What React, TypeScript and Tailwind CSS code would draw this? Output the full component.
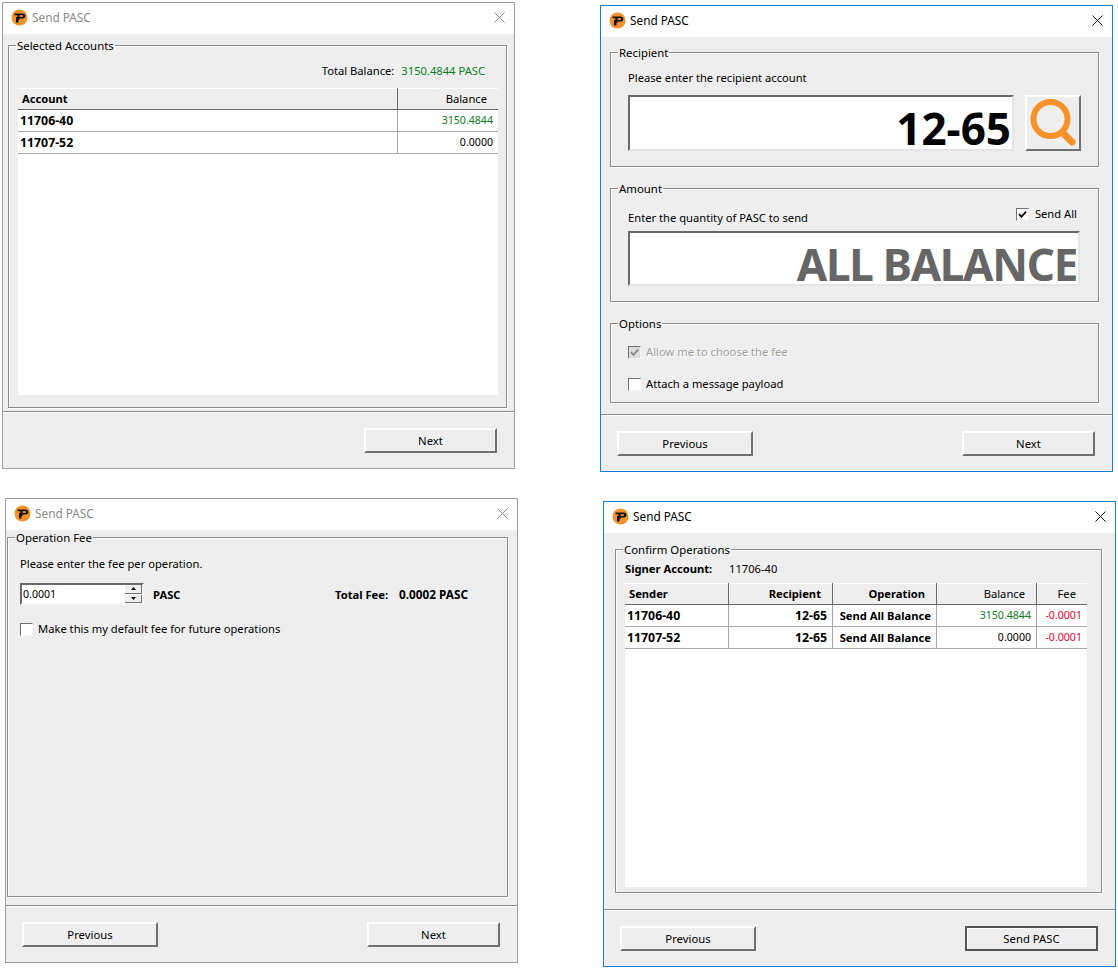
import type { ReactNode } from 'react';

const GREEN = 'text-[#0a7d1e]';
const RED = 'text-[#f5002f]';

function Logo() {
  return (
    <svg width="17" height="17" viewBox="0 0 17 17" className="shrink-0">
      <circle cx="8.5" cy="8.5" r="8" fill="#f7922a" />
      <path d="M3.5 4.5h8.5a2.5 2.5 0 0 1 0 5H8.5v1.5H7.5v2.5H5V8H6.3V6.3H3.5z" fill="#111" />
      <rect x="8.5" y="6.2" width="3.5" height="1.7" fill="#f7922a" />
    </svg>
  );
}

function Window({
  className,
  active,
  children
}: {
  className: string;
  active?: boolean;
  children: ReactNode;
}) {
  return (
    <div className={`absolute flex flex-col border bg-[#eeeeee] ${active ? 'border-[#1a7fd0]' : 'border-[#a0a0a0]'} ${className}`}>
      <div className="flex h-[31px] shrink-0 items-center bg-white pb-[2px] pl-2 pr-[9px]">
        <Logo />
        <span className={`ml-1 text-[11.8px] ${active ? 'text-black' : 'text-[#8a8a8a]'}`}>Send PASC</span>
        <svg width="11" height="11" viewBox="0 0 11 11" className="ml-auto" stroke={active ? '#111' : '#8a8a8a'}>
          <path d="M.5.5l10 10M10.5.5l-10 10" fill="none" />
        </svg>
      </div>
      {children}
    </div>
  );
}

function Group({ title, className, children }: { title: string; className: string; children: ReactNode }) {
  return (
    <div className={`relative flex flex-col border border-[#8c8c8c] shadow-[1px_1px_0_#fff,inset_1px_1px_0_#fff] ${className}`}>
      <span className="absolute -top-[8px] left-[7px] bg-[#eeeeee] px-[1px] text-[11.4px] leading-4 text-black">{title}</span>
      {children}
    </div>
  );
}

function Button({ label, className, primary }: { label: string; className: string; primary?: boolean }) {
  return (
    <button
      type="button"
      className={`h-[25px] bg-[#eeeeee] pt-[1px] text-[11.3px] text-black ${
        primary
          ? 'border-2 border-t-[#555] border-r-[#555] border-b-[#555] border-l-[#555] shadow-[inset_1px_1px_0_#fff]'
          : 'border-2 border-t-white border-l-white border-r-[#707070] border-b-[#707070]'
      } ${className}`}
    >
      {label}
    </button>
  );
}

function Footer({ previous, next = 'Next', primary }: { previous?: boolean; next?: string; primary?: boolean }) {
  return (
    <div className="flex h-[57px] shrink-0 items-start justify-between border-t border-[#8c8c8c] pl-4 pr-[17px] pt-4 shadow-[inset_0_1px_0_#fff]">
      {previous ? <Button label="Previous" className="w-[136px]" /> : <span />}
      <Button label={next} className="w-[133px]" primary={primary} />
    </div>
  );
}

function Checkbox({ checked, disabled }: { checked?: boolean; disabled?: boolean }) {
  return (
    <span
      className={`flex h-[13px] w-[13px] shrink-0 items-center justify-center border border-t-[#707070] border-l-[#707070] border-r-[#f5f5f5] border-b-[#f5f5f5] ${
        disabled ? 'bg-[#dcdcdc]' : 'bg-white'
      }`}
    >
      {checked ? (
        <svg width="9" height="9" viewBox="0 0 9 9">
          <path d="M1 4.2l2.4 2.6L8 1.6" fill="none" stroke={disabled ? '#8a8a8a' : '#000'} strokeWidth="1.8" />
        </svg>
      ) : null}
    </span>
  );
}

type Cell = { text: string; align?: 'right'; bold?: boolean; num?: boolean; color?: string };

function cellFont(c: Cell) {
  if (c.num) return c.bold ? 'text-[12.3px] font-bold' : 'text-[10.6px]';
  return c.bold ? 'font-bold' : '';
}

function Table({
  columns,
  header,
  rows,
  className
}: {
  columns: string;
  header: Cell[];
  rows: Cell[][];
  className: string;
}) {
  return (
    <div className={`flex flex-col bg-white text-black ${className}`}>
      <div className={`grid h-[22px] shrink-0 border-b border-[#6a6a6a] bg-[#eeeeee] shadow-[inset_0_1px_0_#fff] ${columns}`}>
        {header.map((c, i) => (
          <div
            key={c.text}
            className={`flex items-center pt-[2px] ${i > 0 ? 'border-l border-[#6a6a6a]' : ''} ${
              c.align === 'right' ? 'justify-end pr-[11px]' : 'pl-1'
            } ${cellFont(c)}`}
          >
            {c.text}
          </div>
        ))}
      </div>
      {rows.map((row) => (
        <div key={row[0].text} className={`grid h-[22px] shrink-0 border-b border-[#a8a8a8] ${columns}`}>
          {row.map((c, i) => (
            <div
              key={i}
              className={`flex items-center pt-[1px] ${i > 0 ? 'border-l border-[#a8a8a8]' : ''} ${
                c.align === 'right' ? 'justify-end pr-[5px]' : 'pl-[2px]'
              } ${cellFont(c)} ${c.color ?? ''}`}
            >
              {c.text}
            </div>
          ))}
        </div>
      ))}
    </div>
  );
}

function BigField({ value, className, textClass }: { value: string; className: string; textClass: string }) {
  return (
    <div
      className={`flex items-center justify-end border-2 border-t-[#6a6a6a] border-l-[#6a6a6a] border-r-[#e4e4e4] border-b-[#e4e4e4] bg-white pr-[1px] ${className}`}
    >
      <span className={`font-bold ${textClass}`}>{value}</span>
    </div>
  );
}

function Spinner() {
  return (
    <div className="flex h-[22px] w-[124px] border-2 border-t-[#6a6a6a] border-l-[#6a6a6a] border-r-[#f5f5f5] border-b-[#f5f5f5] bg-white">
      <span className="flex-1 pl-[1px] text-[10.6px] leading-[18px] text-black">0.0001</span>
      <div className="flex w-[17px] flex-col">
        <span className="flex h-[9px] items-center justify-center border-b border-r border-[#707070] bg-[#eeeeee]">
          <svg width="5" height="3" viewBox="0 0 5 3"><path d="M2.5 0L5 3H0z" fill="#000" /></svg>
        </span>
        <span className="mt-[1px] flex h-[9px] items-center justify-center border-b border-r border-[#707070] bg-[#eeeeee]">
          <svg width="5" height="3" viewBox="0 0 5 3"><path d="M0 0h5L2.5 3z" fill="#000" /></svg>
        </span>
      </div>
    </div>
  );
}

export default function App() {
  return (
    <div className="relative h-[969px] w-[1118px] overflow-hidden bg-white font-['Noto_Sans',sans-serif] text-[11.2px]">
      {/* Selected accounts */}
      <Window className="left-[2px] top-[2px] h-[467px] w-[513px]">
        <div className="flex min-h-0 flex-1 flex-col pb-[3px] pl-[5px] pr-[7px] pt-[11px]">
          <Group title="Selected Accounts" className="flex-1 pb-3 pl-[9px] pr-2 pt-[17px]">
            <div className="mb-[9px] mr-[13px] flex h-4 items-center justify-end pt-[1px]">
              <span className="text-black">Total Balance:</span>
              <span className={`ml-[7px] ${GREEN}`}>3150.4844 PASC</span>
            </div>
            <Table
              className="flex-1"
              columns="grid-cols-[379px_101px]"
              header={[{ text: 'Account', bold: true }, { text: 'Balance', align: 'right' }]}
              rows={[
                [{ text: '11706-40', bold: true, num: true }, { text: '3150.4844', align: 'right', num: true, color: GREEN }],
                [{ text: '11707-52', bold: true, num: true }, { text: '0.0000', align: 'right', num: true }]
              ]}
            />
          </Group>
        </div>
        <Footer />
      </Window>

      {/* Recipient and amount */}
      <Window active className="left-[600px] top-[5px] h-[467px] w-[513px]">
        <div className="flex min-h-0 flex-1 flex-col pb-[11px] pl-[9px] pr-[13px] pt-[15px]">
          <Group title="Recipient" className="h-[116px] px-[17px] pt-[17px]">
            <div className="mb-[9px] flex h-4 items-center pt-[1px] text-black">Please enter the recipient account</div>
            <div className="flex items-start">
              <BigField value="12-65" className="h-[56px] w-[386px]" textClass="pt-[10px] text-[44px] leading-[40px] text-black" />
              <div className="ml-[11px] flex h-[56px] w-[56px] items-center justify-center border-2 border-t-white border-l-white border-r-[#707070] border-b-[#707070]">
                <svg width="46" height="48" viewBox="0 0 46 48" fill="none" stroke="#f7922a" strokeLinecap="round">
                  <circle cx="20.5" cy="20" r="17" strokeWidth="6" />
                  <path d="M33 34l9 9" strokeWidth="7" />
                </svg>
              </div>
            </div>
          </Group>
          <Group title="Amount" className="mt-[21px] h-[115px] px-[17px] pt-[20px]">
            <div className="flex h-4 items-center justify-between text-black">
              <span className="pt-[2px]">Enter the quantity of PASC to send</span>
              <span className="-mt-[5px] flex items-center pr-1">
                <Checkbox checked />
                <span className="ml-[6px]">Send All</span>
              </span>
            </div>
            <BigField value="ALL BALANCE" className="mt-[6px] h-[55px] w-[452px]" textClass="pt-[11px] text-[44px] leading-[40px] tracking-[-1.3px] text-[#666666]" />
          </Group>
          <Group title="Options" className="mt-[21px] h-[80px] px-[17px] pt-[20px]">
            <div className="flex h-4 items-center">
              <Checkbox checked disabled />
              <span className="ml-[5px] text-[#a0a0a0] [text-shadow:1px_1px_0_#fff]">Allow me to choose the fee</span>
            </div>
            <div className="mt-4 flex h-4 items-center text-black">
              <Checkbox />
              <span className="ml-[5px]">Attach a message payload</span>
            </div>
          </Group>
        </div>
        <Footer previous />
      </Window>

      {/* Operation fee */}
      <Window className="left-[5px] top-[498px] h-[465px] w-[513px]">
        <div className="flex min-h-0 flex-1 flex-col pb-2 pl-[1px] pr-[9px] pt-[7px]">
          <Group title="Operation Fee" className="flex-1 pl-3 pt-[18px] text-black">
            <div className="flex h-4 items-center">Please enter the fee per operation.</div>
            <div className="mt-[11px] flex items-center">
              <Spinner />
              <span className="ml-[9px] w-[182px] pt-[2px] font-bold">PASC</span>
              <span className="w-[64px] pt-[2px] font-bold">Total Fee:</span>
              <span className="pt-[2px] text-[11.8px] font-bold">0.0002 PASC</span>
            </div>
            <div className="mt-4 flex h-4 items-center">
              <Checkbox />
              <span className="ml-[5px]">Make this my default fee for future operations</span>
            </div>
          </Group>
        </div>
        <Footer previous />
      </Window>

      {/* Confirm */}
      <Window active className="left-[603px] top-[501px] h-[466px] w-[513px]">
        <div className="flex min-h-0 flex-1 flex-col pb-4 pl-[11px] pr-[13px] pt-4">
          <Group title="Confirm Operations" className="flex-1 pb-[5px] pl-[9px] pr-[14px] pt-[11px]">
            <div className="mb-[6px] flex h-4 items-center pt-[1px] text-black">
              <span className="w-[104px] font-bold">Signer Account:</span>
              <span>11706-40</span>
            </div>
            <Table
              className="flex-1"
              columns="grid-cols-[103px_104px_104px_100px_51px]"
              header={[
                { text: 'Sender', bold: true },
                { text: 'Recipient', bold: true, align: 'right' },
                { text: 'Operation', bold: true, align: 'right' },
                { text: 'Balance', align: 'right' },
                { text: 'Fee', align: 'right' }
              ]}
              rows={[
                [
                  { text: '11706-40', bold: true, num: true },
                  { text: '12-65', bold: true, num: true, align: 'right' },
                  { text: 'Send All Balance', bold: true, align: 'right' },
                  { text: '3150.4844', align: 'right', num: true, color: GREEN },
                  { text: '-0.0001', align: 'right', num: true, color: RED }
                ],
                [
                  { text: '11707-52', bold: true, num: true },
                  { text: '12-65', bold: true, num: true, align: 'right' },
                  { text: 'Send All Balance', bold: true, align: 'right' },
                  { text: '0.0000', align: 'right', num: true },
                  { text: '-0.0001', align: 'right', num: true, color: RED }
                ]
              ]}
            />
          </Group>
        </div>
        <Footer previous next="Send PASC" primary />
      </Window>
    </div>
  );
}
